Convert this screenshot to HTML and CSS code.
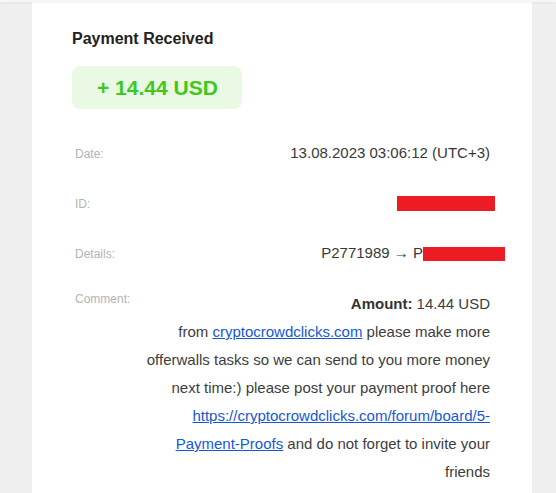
FILE: index.html
```html
<!DOCTYPE html>
<html>
<head>
<meta charset="utf-8">
<link rel="stylesheet" href="styles.css">
</head>
<body>
<div class="topbar"></div>
<div class="card">
  <h1 class="title">Payment Received</h1>
  <div class="badge">+ 14.44 USD</div>
  <div class="rows">
    <div class="row">
      <div class="label">Date:</div>
      <div class="value">13.08.2023 03:06:12 (UTC+3)</div>
    </div>
    <div class="row">
      <div class="label">ID:</div>
      <div class="value"><span class="redact redact-id"></span></div>
    </div>
    <div class="row">
      <div class="label">Details:</div>
      <div class="value">P2771989 → P<span class="redact redact-details"></span></div>
    </div>
    <div class="row row-top">
      <div class="label">Comment:</div>
      <div class="value comment"><b>Amount:</b> 14.44 USD<br>from <a href="#">cryptocrowdclicks.com</a> please make more offerwalls tasks so we can send to you more money next time:) please post your payment proof here <a href="#">https://cryptocrowdclicks.com/forum/board/5-Payment-Proofs</a> and do not forget to invite your friends</div>
    </div>
  </div>
</div>
</body>
</html>
```
FILE: styles.css
```css
html, body {
  margin: 0;
  padding: 0;
}
body {
  background: #efefef;
  font-family: "Liberation Sans", Arial, sans-serif;
  height: 493px;
  overflow: hidden;
}
.topbar {
  height: 2px;
  background: #f7f7f7;
  box-shadow: 0 1px 2px rgba(0, 0, 0, 0.05);
  position: relative;
}
.card {
  margin-left: 32px;
  width: 500px;
  box-sizing: border-box;
  background: #ffffff;
  padding: 27px 42px 0 40px;
  height: 491px;
}
.title {
  margin: 0;
  font-size: 16px;
  line-height: 20px;
  font-weight: bold;
  color: #222222;
}
.badge {
  display: inline-block;
  margin-top: 17px;
  height: 43px;
  line-height: 43px;
  padding: 0 24px 0 25px;
  border-radius: 8px;
  background: #e9f9e4;
  color: #3fc71f;
  font-size: 21px;
  font-weight: bold;
}
.rows {
  margin-top: 19px;
}
.row {
  display: flex;
  align-items: baseline;
  padding: 14px 0;
}
.row-top {
  align-items: flex-start;
  padding-top: 12px;
}
.label {
  width: 60px;
  padding-left: 3px;
  flex: none;
  font-size: 12px;
  line-height: 18px;
  color: #b3b3b3;
}
.value {
  flex: 1;
  text-align: right;
  font-size: 15px;
  line-height: 22px;
  color: #383838;
}
.comment {
  line-height: 28px;
  color: #3d3d3d;
}
.comment b {
  font-weight: bold;
  color: #333333;
}
.comment a {
  color: #1558d6;
  text-decoration: underline;
}
.redact {
  display: inline-block;
  background: #ed1c24;
  vertical-align: -3px;
}
.redact-id {
  width: 98px;
  height: 15px;
  margin-right: -5px;
}
.redact-details {
  width: 82px;
  height: 14px;
  margin-right: -15px;
}
```
